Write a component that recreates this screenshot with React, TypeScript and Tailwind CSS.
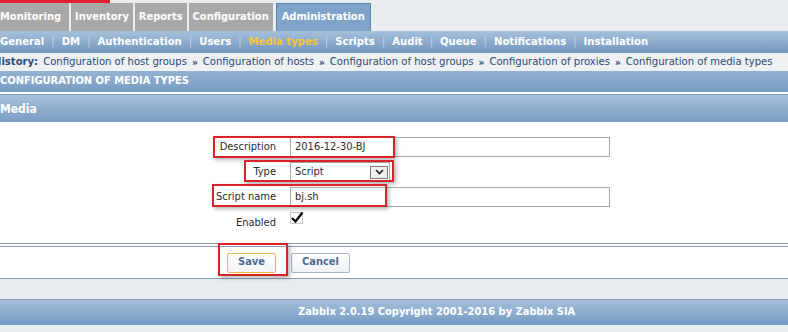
import React from "react";

const font = { fontFamily: '"DejaVu Sans Condensed", "DejaVu Sans", sans-serif' };

const tabs = ["Monitoring", "Inventory", "Reports", "Configuration"];
const subNav = ["General", "DM", "Authentication", "Users", "Media types", "Scripts", "Audit", "Queue", "Notifications", "Installation"];
const history = [
  "Configuration of host groups",
  "Configuration of hosts",
  "Configuration of host groups",
  "Configuration of proxies",
  "Configuration of media types",
];

function RedBox({ className }: { className: string }) {
  return <div className={`absolute border-2 border-[#d9232b] shadow-[2px_2px_4px_rgba(0,0,0,0.3)] ${className}`} />;
}

export default function App() {
  return (
    <div className="w-[788px] h-[332px] overflow-hidden bg-[#e9edf0] text-[11px]" style={font}>
      {/* top tabs */}
      <div className="h-[3px] w-[110px] bg-[#e0212b]" />
      <div className="flex h-[28px] items-stretch">
        {tabs.map((t, i) => (
          <div
            key={t}
            className={`flex items-center bg-[#a8a8a8] text-white font-bold mr-[2px] ${i === 0 ? "pl-0 pr-[8px]" : "px-[4px]"}`}
          >
            {t}
          </div>
        ))}
        <div className="flex items-center bg-[#7fa3c9] border border-b-0 border-[#5e84ae] text-white font-bold px-[5px] ml-[1px]">
          Administration
        </div>
      </div>

      {/* sub nav */}
      <div className="h-[22px] flex items-center bg-gradient-to-b from-[#a6c0da] to-[#7397be] text-white font-bold text-[11.2px]">
        {subNav.map((s, i) => (
          <React.Fragment key={s}>
            {i > 0 && <span className="px-[7px] text-[#c3d4e6] font-normal">|</span>}
            <span className={s === "Media types" ? "text-[#f5c63b]" : ""}>{s}</span>
          </React.Fragment>
        ))}
      </div>

      {/* history */}
      <div className="h-[18px] flex items-center bg-[#eef0f2] text-[#2a4c78] ml-[-7px] whitespace-nowrap text-[11.2px]">
        <span className="font-bold mr-[5px]">History:</span>
        {history.map((h, i) => (
          <React.Fragment key={i}>
            {i > 0 && <span className="px-[5px] font-bold text-[10px]">»</span>}
            <span>{h}</span>
          </React.Fragment>
        ))}
      </div>

      {/* page header */}
      <div className="h-[21px] flex items-center bg-gradient-to-b from-[#94b2d2] to-[#779cc3] text-white font-bold">
        CONFIGURATION OF MEDIA TYPES
      </div>
      <div className="h-[2px] bg-white" />
      <div className="h-[1px] bg-[#8c9db2]" />
      <div className="h-[27px] flex items-center bg-gradient-to-b from-[#a7c0da] to-[#789cc2] text-white font-bold text-[12px]">
        Media
      </div>

      {/* form */}
      <div className="relative bg-white h-[121px] pt-[15px]">
        <div className="grid grid-cols-[276px_1fr] gap-x-[14px] gap-y-[5px] items-center text-[#2b2b2b]">
          <div className="text-right">Description</div>
          <div className="h-[20px] w-[320px] border border-[#a9a9a9] flex items-center px-[4px]">2016-12-30-BJ</div>

          <div className="text-right">Type</div>
          <div className="h-[20px] w-[100px] border border-[#a9a9a9] flex items-center justify-between pl-[4px] pr-[1px]">
            <span>Script</span>
            <span className="w-[18px] h-[13px] border border-[#7d7d7d] bg-[#eeeeee] flex items-center justify-center">
              <svg width="9" height="6" viewBox="0 0 9 6">
                <path d="M1 1 L4.5 4.5 L8 1" stroke="#222" strokeWidth="1.6" fill="none" />
              </svg>
            </span>
          </div>

          <div className="text-right">Script name</div>
          <div className="h-[20px] w-[320px] border border-[#a9a9a9] flex items-center px-[4px]">bj.sh</div>

          <div className="text-right pt-[2px]">Enabled</div>
          <div className="h-[20px] flex items-start">
            <span className="relative w-[13px] h-[12px] border border-[#c8c8c8]">
              <svg className="absolute left-[-1px] top-[-2px]" width="14" height="13" viewBox="0 0 14 13">
                <path d="M2 7 L5.5 10.5 L12.5 1.5" stroke="#111" strokeWidth="2.4" fill="none" />
              </svg>
            </span>
          </div>
        </div>
        <RedBox className="left-[213px] top-[14px] w-[182px] h-[22px]" />
        <RedBox className="left-[244px] top-[38px] w-[150px] h-[22px]" />
        <RedBox className="left-[212px] top-[62px] w-[175px] h-[23px]" />
      </div>

      {/* buttons */}
      <div className="h-[1px] bg-[#8c9db2]" />
      <div className="h-[2px] bg-white" />
      <div className="h-[1px] bg-[#8c9db2]" />
      <div className="relative bg-white h-[31px] flex items-center gap-[15px] pl-[227px]">
        <button className="h-[20px] w-[49px] rounded-[2px] border border-[#eeb560] bg-gradient-to-b from-white to-[#f1f3f6] text-[#4c6a92] font-bold">
          Save
        </button>
        <button className="h-[20px] w-[59px] rounded-[2px] border border-[#a6b7ca] bg-gradient-to-b from-white to-[#eef1f5] text-[#4c6a92] font-bold">
          Cancel
        </button>
        <RedBox className="left-[218px] top-[-4px] w-[70px] h-[33px]" />
      </div>
      <div className="h-[1px] bg-[#8c9db2]" />
      <div className="h-[20px]" />
      <div className="h-[1px] bg-[#8c9db2]" />
      <div className="h-[25px] flex items-center bg-gradient-to-b from-[#a6c0da] to-[#7499c0] text-white font-bold pl-[298px]">
        Zabbix 2.0.19 Copyright 2001-2016 by Zabbix SIA
      </div>
    </div>
  );
}
